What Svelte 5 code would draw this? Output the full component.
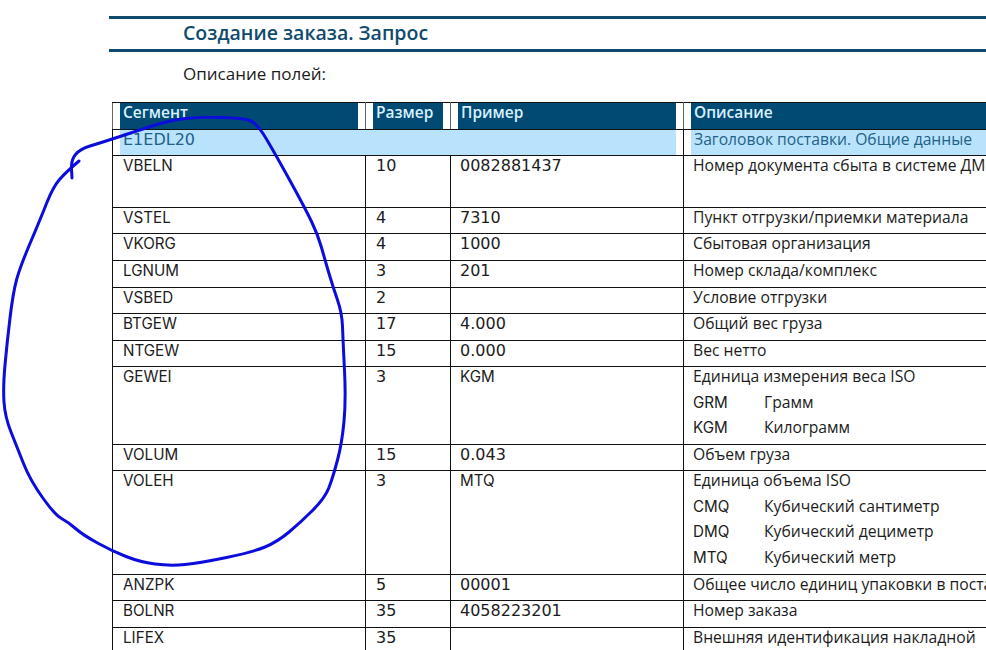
<script>
    // rows of the segment table, h = row height in px
    const rows = [
        { seg: 'VBELN', size: '10', ex: '0082881437', desc: 'Номер документа сбыта в системе ДМ', h: 52 },
        { seg: 'VSTEL', size: '4', ex: '7310', desc: 'Пункт отгрузки/приемки материала', h: 26 },
        { seg: 'VKORG', size: '4', ex: '1000', desc: 'Сбытовая организация', h: 27 },
        { seg: 'LGNUM', size: '3', ex: '201', desc: 'Номер склада/комплекс', h: 27 },
        { seg: 'VSBED', size: '2', ex: '', desc: 'Условие отгрузки', h: 26 },
        { seg: 'BTGEW', size: '17', ex: '4.000', desc: 'Общий вес груза', h: 27 },
        { seg: 'NTGEW', size: '15', ex: '0.000', desc: 'Вес нетто', h: 26 },
        { seg: 'GEWEI', size: '3', ex: 'KGM', desc: 'Единица измерения веса ISO', h: 78, units: [['GRM', 'Грамм'], ['KGM', 'Килограмм']] },
        { seg: 'VOLUM', size: '15', ex: '0.043', desc: 'Объем груза', h: 26 },
        { seg: 'VOLEH', size: '3', ex: 'MTQ', desc: 'Единица объема ISO', h: 104, units: [['CMQ', 'Кубический сантиметр'], ['DMQ', 'Кубический дециметр'], ['MTQ', 'Кубический метр']] },
        { seg: 'ANZPK', size: '5', ex: '00001', desc: 'Общее число единиц упаковки в поставке', h: 26 },
        { seg: 'BOLNR', size: '35', ex: '4058223201', desc: 'Номер заказа', h: 27 },
        { seg: 'LIFEX', size: '35', ex: '', desc: 'Внешняя идентификация накладной', h: 27 }
    ];

    // hand drawn circle around the first column
    const pts = [
        [79, 161], [66, 172], [53, 187], [40, 220], [20, 267], [13, 293], [7, 343], [3, 387], [5, 417], [17, 447],
        [30, 480], [55, 515], [68, 522], [83, 535], [112, 551], [140, 562], [170, 566], [200, 563], [253, 552],
        [277, 542], [300, 523], [325, 498], [333, 477], [342, 443], [346, 400], [343, 340], [342, 313], [333, 287],
        [325, 260], [318, 235], [305, 208], [277, 157], [257, 123], [243, 118], [200, 117], [170, 120], [140, 130],
        [100, 143], [80, 149], [71, 160], [72, 178]
    ];

    let scribble = `M${pts[0][0]} ${pts[0][1]}`;
    for (let i = 1; i < pts.length - 1; i++) {
        const mx = (pts[i][0] + pts[i + 1][0]) / 2;
        const my = (pts[i][1] + pts[i + 1][1]) / 2;
        scribble += ` Q${pts[i][0]} ${pts[i][1]} ${mx} ${my}`;
    }
    scribble += ` L${pts[pts.length - 1][0]} ${pts[pts.length - 1][1]}`;
</script>

<main class="page">
    <h1 class="title">Создание заказа. Запрос</h1>
    <p class="intro">Описание полей:</p>

    <table>
        <colgroup>
            <col class="c1" />
            <col class="c2" />
            <col class="c3" />
            <col class="c4" />
        </colgroup>
        <thead>
            <tr>
                <th><div>Сегмент</div></th>
                <th><div>Размер</div></th>
                <th><div>Пример</div></th>
                <th><div>Описание</div></th>
            </tr>
        </thead>
        <tbody>
            <tr class="group">
                <td colspan="3"><div class="latin">E1EDL20</div></td>
                <td><div>Заголовок поставки. Общие данные</div></td>
            </tr>
            {#each rows as row}
                <tr style="height: {row.h}px">
                    <td class="latin">{row.seg}</td>
                    <td class="latin num">{row.size}</td>
                    <td class="latin" class:num={/^[\d.]+$/.test(row.ex)}>{row.ex}</td>
                    <td>
                        {row.desc}
                        {#if row.units}
                            <div class="units">
                                {#each row.units as unit}
                                    <div class="unit"><span class="latin">{unit[0]}</span>{unit[1]}</div>
                                {/each}
                            </div>
                        {/if}
                    </td>
                </tr>
            {/each}
        </tbody>
    </table>

    <svg class="scribble" width="986" height="650" viewBox="0 0 986 650" aria-hidden="true">
        <path d={scribble} />
    </svg>
</main>

<style>
    :global(body) {
        margin: 0;
        background: #fff;
    }
    .page {
        position: relative;
        width: 986px;
        height: 650px;
        overflow: hidden;
        font-family: "Open Sans", "Noto Sans", sans-serif;
        font-size: 15.7px;
        color: #1c1c1c;
    }
    .title {
        margin: 16px 0 0 109px;
        padding-left: 74px;
        height: 30px;
        border-top: 3px solid #0f4a6e;
        border-bottom: 3px solid #0f4a6e;
        font-size: 19.5px;
        line-height: 28px;
        font-weight: 600;
        color: #0f4a6e;
    }
    .intro {
        margin: 12px 0 0 183px;
        height: 20px;
        font-size: 17px;
        line-height: 20px;
    }
    table {
        margin: 18px 0 0 112px;
        width: 971px;
        table-layout: fixed;
        border-collapse: collapse;
    }
    .c1 { width: 253px; }
    .c2 { width: 85px; }
    .c3 { width: 233px; }
    .c4 { width: 400px; }
    th, td {
        border: 1px solid #111;
        padding: 0;
        white-space: nowrap;
        overflow: hidden;
        text-align: left;
        vertical-align: top;
    }
    td {
        padding-left: 10px;
        line-height: 18px;
    }
    td:nth-child(n+3) {
        padding-left: 9px;
    }
    th {
        height: 26px;
        padding: 0 7px;
        border-right-color: #666;
        border-left-color: #666;
        color: #d9f0ff;
        font-size: 15.5px;
        font-weight: 600;
        line-height: 18px;
    }
    th div {
        height: 26px;
        padding-left: 3px;
        background: #004a73;
    }
    .group {
        height: 26px;
    }
    .group td {
        padding: 0 7px;
        color: #1f6189;
    }
    .group td div {
        height: 25px;
        padding-left: 3px;
        background: #b9e3fc;
        line-height: 18px;
    }
    .latin {
        font-family: Inter, sans-serif;
        font-size: 15.2px;
        line-height: 20px;
    }
    .group td .latin {
        font-family: "DejaVu Sans", sans-serif;
        font-size: 16px;
        line-height: 20px;
    }
    .num {
        font-family: "DejaVu Sans", sans-serif;
        font-size: 16px;
    }
    .units {
        padding-top: 4.5px;
    }
    .unit {
        line-height: 25.5px;
    }
    .unit span {
        display: inline-block;
        width: 71px;
    }
    .scribble {
        position: absolute;
        top: 0;
        left: 0;
        pointer-events: none;
    }
    .scribble path {
        fill: none;
        stroke: #0c0cdc;
        stroke-width: 3;
        stroke-linecap: round;
        stroke-linejoin: round;
    }
</style>
